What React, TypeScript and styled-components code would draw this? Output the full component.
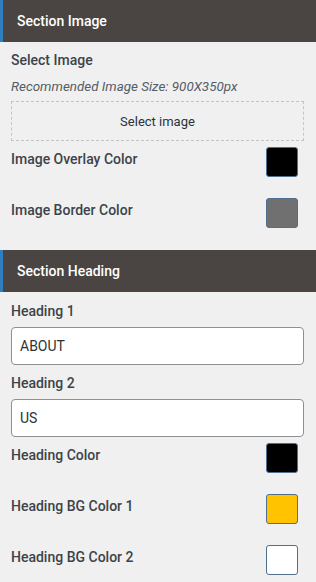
import React from "react";
import styled, { createGlobalStyle } from "styled-components";

const Global = createGlobalStyle`
  html, body { margin: 0; padding: 0; background: #f0f0f0; }
  body { font-family: Roboto, "Liberation Sans", Arial, sans-serif; }
  * { box-sizing: border-box; }
`;

const Panel = styled.div`
  width: 316px;
  background: #f0f0f0;
`;

const SectionHeader = styled.div<{ $mb?: number }>`
  height: 42px;
  background: #4a4542;
  border-left: 3px solid #2f7fbf;
  color: #ffffff;
  font-size: 14px;
  font-weight: 500;
  display: flex;
  align-items: center;
  padding-left: 14px;
  margin-bottom: ${(p) => p.$mb ?? 8}px;
`;

const Body = styled.div`
  padding: 0 12px 0 11px;
  display: flex;
  flex-direction: column;
`;

const Label = styled.div<{ $mt?: number }>`
  font-size: 14px;
  font-weight: 500;
  color: #3c434a;
  line-height: 18px;
  margin-top: ${(p) => p.$mt ?? 0}px;
`;

const Hint = styled.div`
  font-size: 13.4px;
  font-style: italic;
  color: #555d66;
  line-height: 18px;
  margin-top: 9px;
`;

const SelectBox = styled.div`
  margin-top: 5px;
  height: 40px;
  border: 1px dashed #c3c4c7;
  display: flex;
  align-items: center;
  justify-content: center;
  font-size: 13px;
  color: #2c3338;
`;

const ColorRow = styled.div`
  display: flex;
  justify-content: space-between;
  align-items: flex-start;
  height: 51px;
  padding-top: 6px;
`;

const RowLabel = styled(Label)`
  margin-top: 3px;
`;

const Swatch = styled.div<{ $c: string }>`
  width: 32px;
  height: 30px;
  margin-right: 6px;
  border-radius: 3px;
  border: 1px solid #4f6f8f;
  background: ${(p) => p.$c};
`;

const TextInput = styled.input`
  margin-top: 7px;
  height: 38px;
  width: 100%;
  border: 1px solid #8c8f94;
  border-radius: 4px;
  background: #ffffff;
  padding: 0 8px;
  font-family: Roboto, "Liberation Sans", Arial, sans-serif;
  font-size: 14px;
  color: #2c3338;
  outline: none;
`;

const Spacer = styled.div<{ $h: number }>`
  height: ${(p) => p.$h}px;
`;

export default function App() {
  return (
    <>
      <Global />
      <Panel>
        <SectionHeader $mb={9}>Section Image</SectionHeader>
        <Body>
          <Label>Select Image</Label>
          <Hint>Recommended Image Size: 900X350px</Hint>
          <SelectBox>Select image</SelectBox>
          <ColorRow>
            <RowLabel>Image Overlay Color</RowLabel>
            <Swatch $c="#000000" />
          </ColorRow>
          <ColorRow>
            <RowLabel>Image Border Color</RowLabel>
            <Swatch $c="#707070" />
          </ColorRow>
        </Body>
        <Spacer $h={7} />
        <SectionHeader $mb={10}>Section Heading</SectionHeader>
        <Body>
          <Label>Heading 1</Label>
          <TextInput defaultValue="ABOUT" readOnly />
          <Label $mt={9}>Heading 2</Label>
          <TextInput defaultValue="US" readOnly />
          <ColorRow>
            <RowLabel>Heading Color</RowLabel>
            <Swatch $c="#000000" />
          </ColorRow>
          <ColorRow>
            <RowLabel>Heading BG Color 1</RowLabel>
            <Swatch $c="#ffc300" />
          </ColorRow>
          <ColorRow>
            <RowLabel>Heading BG Color 2</RowLabel>
            <Swatch $c="#ffffff" />
          </ColorRow>
        </Body>
      </Panel>
    </>
  );
}
